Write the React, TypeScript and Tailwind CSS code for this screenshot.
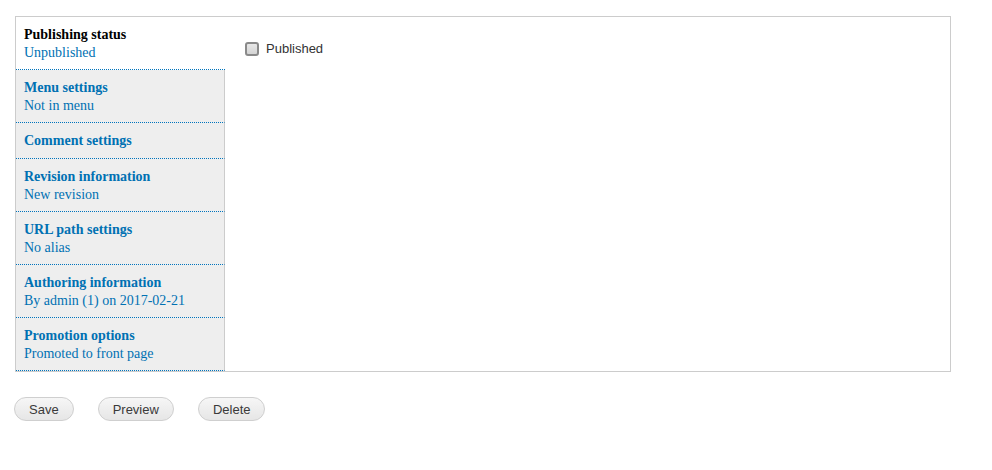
const tabs = [
  { title: "Publishing status", summary: "Unpublished" },
  { title: "Menu settings", summary: "Not in menu" },
  { title: "Comment settings", summary: "" },
  { title: "Revision information", summary: "New revision" },
  { title: "URL path settings", summary: "No alias" },
  { title: "Authoring information", summary: "By admin (1) on 2017-02-21" },
  { title: "Promotion options", summary: "Promoted to front page" },
];

function Button({ label }: { label: string }) {
  return (
    <button className="h-[24px] rounded-full border border-[#cfcfcf] bg-gradient-to-b from-[#f6f6f6] to-[#e6e6e6] px-[14px] text-[13px] leading-none text-[#3a3a3a] font-['Liberation_Sans',Arial,sans-serif]">
      {label}
    </button>
  );
}

export default function App() {
  const active = 0;
  return (
    <div className="min-h-[470px] bg-white pl-[15px] pt-[16px] font-['Liberation_Serif','Times_New_Roman',serif]">
      <div className="flex w-[936px] h-[356px] border border-[#cccccc]">
        <ul className="w-[209px] shrink-0">
          {tabs.map((t, i) => (
            <li
              key={t.title}
              className={
                "pl-[8px] pr-[9px] pt-[9px] text-[14px] leading-[18px] border-b border-dotted border-[#0074bd] " +
                (t.summary ? "pb-[7px] " : "pb-[8px] ") +
                (i === active ? "bg-white" : "bg-[#eeeeee] border-r border-r-[#cccccc]")
              }
              style={i === active ? undefined : { borderRightStyle: "solid" }}
            >
              <div className={"font-bold " + (i === active ? "text-black" : "text-[#0071b3]")}>{t.title}</div>
              {t.summary && <div className="text-[#0071b3]">{t.summary}</div>}
            </li>
          ))}
        </ul>
        <div className="flex-1 pl-[20px] pt-[22px]">
          <label className="flex items-center gap-[7px] text-[13px] text-[#333] font-['Liberation_Sans',Arial,sans-serif]">
            <span className="w-[14px] h-[14px] rounded-[3px] border-2 border-[#8a8a8a] bg-gradient-to-b from-[#e8e8e8] to-[#d4d4d4]" />
            Published
          </label>
        </div>
      </div>
      <div className="flex gap-[24px] pt-[25px] -ml-[1px]">
        <Button label="Save" />
        <Button label="Preview" />
        <Button label="Delete" />
      </div>
    </div>
  );
}
